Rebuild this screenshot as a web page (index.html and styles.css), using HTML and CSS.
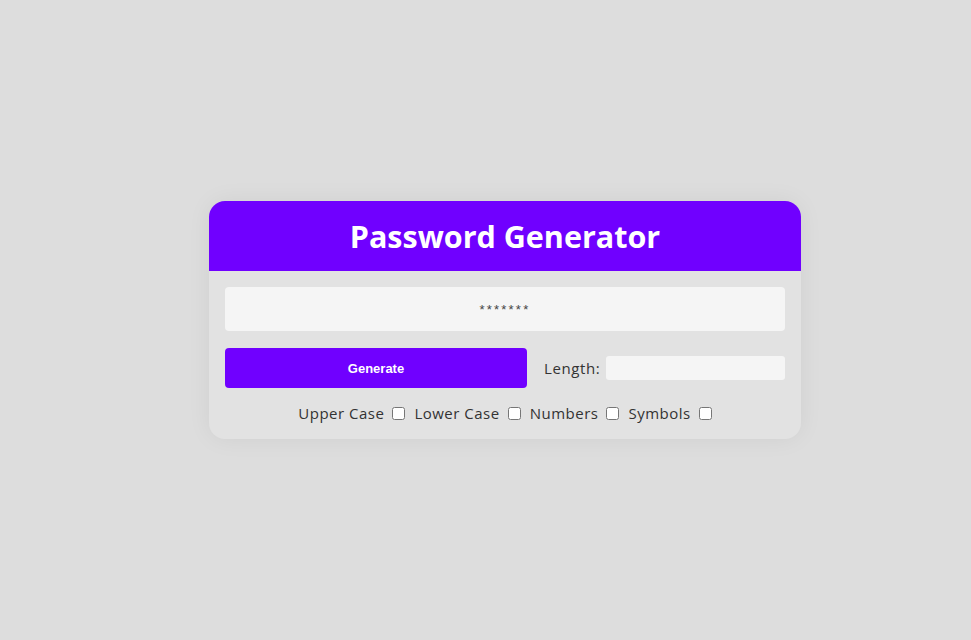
FILE: index.html
```html
<!DOCTYPE html>
<html>
<head>
<meta charset="utf-8">
<link rel="stylesheet" href="styles.css">
</head>
<body>
<div class="card">
  <div class="card-header"><h1>Password Generator</h1></div>
  <div class="card-body">
    <input class="password" type="text" placeholder="*******" readonly>
    <div class="controls">
      <button class="generate">Generate</button>
      <label class="length">Length: <input type="text" class="length-input"></label>
    </div>
    <div class="options">
      <label>Upper Case <input type="checkbox"></label>
      <label>Lower Case <input type="checkbox"></label>
      <label>Numbers <input type="checkbox"></label>
      <label>Symbols <input type="checkbox"></label>
    </div>
  </div>
</div>
</body>
</html>
```
FILE: styles.css
```css
html, body { margin: 0; height: 100%; }
body {
  background: #dddddd;
  display: flex;
  align-items: center;
  justify-content: center;
  padding-left: 39px;
  box-sizing: border-box;
  font-family: "Open Sans", "Noto Sans", sans-serif;
}
.card {
  width: 592px;
  border-radius: 16px;
  overflow: hidden;
  background: #e2e2e2;
  box-shadow: 0 0 24px rgba(0,0,0,0.06);
}
.card-header {
  background: #7000ff;
  height: 70px;
  display: flex;
  align-items: center;
  justify-content: center;
}
.card-header h1 {
  margin: 0;
  color: #fff;
  font-size: 30.5px;
  font-weight: 700;
}
.card-body {
  padding: 16px 16px 16px;
  display: flex;
  flex-direction: column;
}
.password {
  height: 44px;
  border: none;
  border-radius: 4px;
  background: #f5f5f5;
  text-align: center;
  font-size: 13px;
  font-family: "Liberation Sans", Arial, sans-serif;
  outline: none;
  padding: 0;
  box-sizing: border-box;
}
.password::placeholder { color: #444; letter-spacing: 2.2px; }
.controls {
  display: flex;
  align-items: center;
  margin-top: 17px;
  gap: 17px;
}
.generate {
  flex-shrink: 0;
  width: 302px;
  height: 40px;
  border: none;
  border-radius: 4px;
  background: #7000ff;
  color: #fff;
  font-family: "Liberation Sans", Arial, sans-serif;
  font-weight: 700;
  font-size: 13px;
}
.length {
  display: flex;
  align-items: center;
  gap: 6px;
  font-size: 15px;
  letter-spacing: 0.6px;
  color: #333;
  flex: 1 1 0;
  min-width: 0;
}
.length-input {
  flex: 1 1 0;
  width: 0;
  height: 24px;
  border: none;
  border-radius: 3px;
  background: #f5f5f5;
  box-sizing: border-box;
  min-width: 0;
}
.options {
  display: flex;
  justify-content: center;
  gap: 9px;
  margin-top: 15px;
  font-size: 15px;
  letter-spacing: 0.5px;
  color: #333;
}
.options label { display: flex; align-items: center; gap: 8px; }
.options input { margin: 0; width: 13px; height: 13px; }
```
